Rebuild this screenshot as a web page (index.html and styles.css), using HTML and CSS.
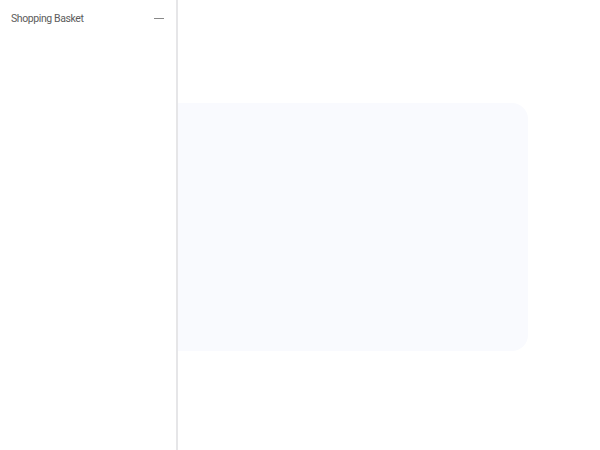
FILE: index.html
```html
<!DOCTYPE html>
<html>
<head>
<meta charset="utf-8">
<link rel="stylesheet" href="styles.css">
</head>
<body>
<main class="content">
  <div class="panel"></div>
</main>
<aside class="drawer">
  <div class="drawer-head">
    <span class="drawer-title">Shopping Basket</span>
    <span class="drawer-toggle" aria-label="collapse"></span>
  </div>
</aside>
</body>
</html>
```
FILE: styles.css
```css
html, body {
  margin: 0;
  padding: 0;
  background: #ffffff;
  width: 600px;
  height: 450px;
  overflow: hidden;
}
.content {
  padding: 103px 72px 0 120px;
}
.panel {
  height: 248px;
  background: #f9fafe;
  border-radius: 16px;
}
.drawer {
  position: fixed;
  top: 0;
  left: 0;
  bottom: 0;
  width: 176px;
  background: #ffffff;
  border-right: 2px solid #e6e6e8;
}
.drawer-head {
  display: flex;
  align-items: center;
  justify-content: space-between;
  padding: 12px 12px 0 11px;
}
.drawer-title {
  font-family: "Roboto", "Noto Sans", sans-serif;
  font-size: 10.5px;
  color: #5c5c5c;
  letter-spacing: -0.4px;
}
.drawer-toggle {
  display: block;
  width: 10px;
  height: 1px;
  background: #888888;
}
```
